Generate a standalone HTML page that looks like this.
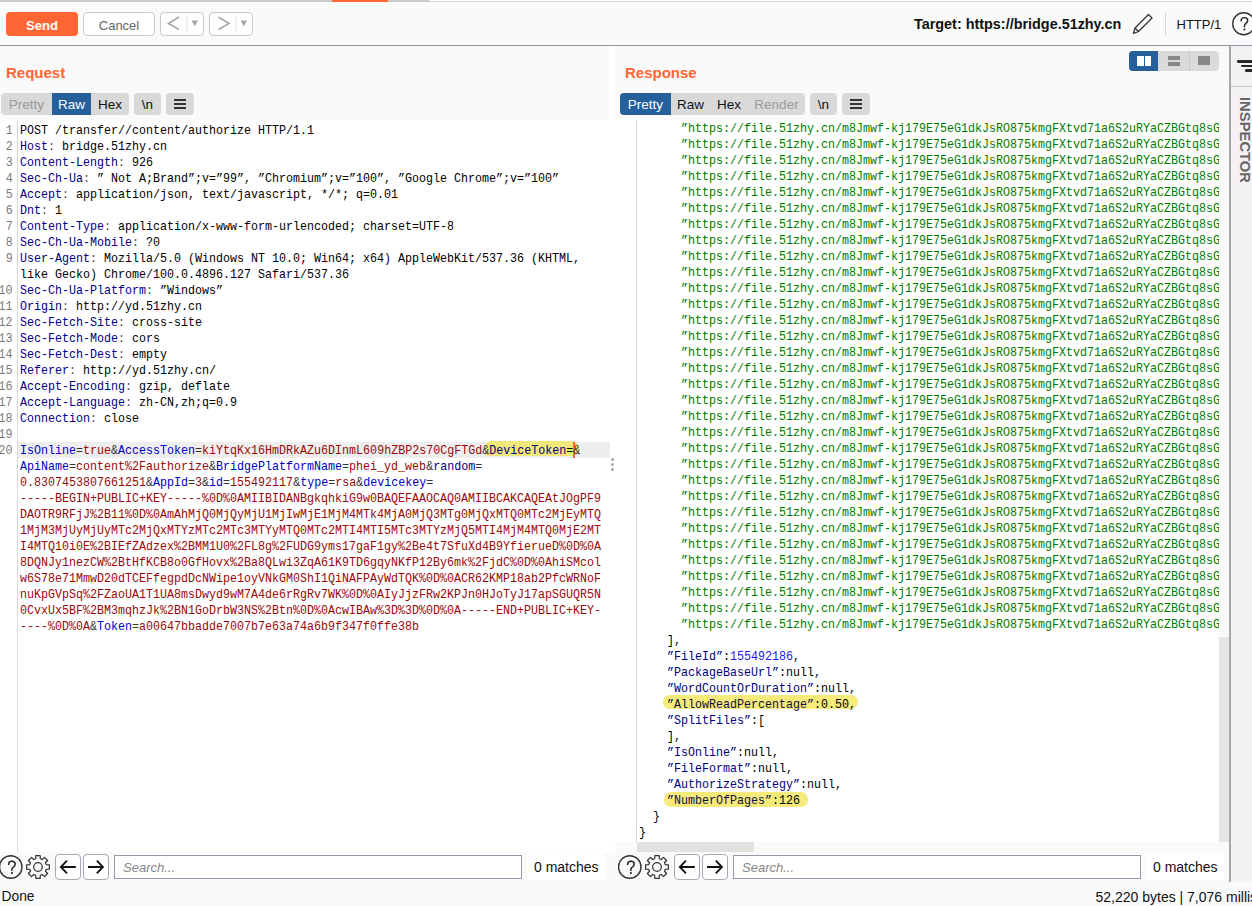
<!DOCTYPE html>
<html><head><meta charset="utf-8">
<style>
*{box-sizing:border-box;margin:0;padding:0}
html,body{width:1252px;height:906px;overflow:hidden;background:#fafafa}
body{position:relative;font-family:"Liberation Sans",sans-serif;color:#000}
.a{position:absolute}
.btn{position:absolute;border:1px solid #c9c9c9;border-radius:4px;background:#fff}
.lbl{position:absolute;font-weight:bold;font-size:15px;color:#ff6633;line-height:16px}
.tabs{position:absolute;top:93px;height:22px;background:#d9d9d9;border-radius:4px;overflow:hidden}
.tab{position:absolute;top:0;height:22px;line-height:23px;font-size:13.5px;text-align:center;color:#111}
.tab.act{background:#25609b;color:#fff}
.tab.dis{color:#9a9a9a}
.code{position:absolute;background:#fff;overflow:hidden}
.cl{position:absolute;left:0;white-space:pre;font-family:"Liberation Mono",monospace;font-size:13px;line-height:16px;height:16px;transform:scaleX(0.89744);transform-origin:0 0}
.ln{position:absolute;right:1px;white-space:pre;font-family:"Liberation Mono",monospace;font-size:13px;line-height:16px;transform:scaleX(0.89744);transform-origin:100% 0;color:#7a7a7a}
.h{color:#000080}.p{color:#555}.t{color:#000}
.n{color:#0000c0}.v{color:#990808}.e{color:#333}.a2{color:#333}
span.a{position:static;color:#333}
.hn{color:#000080}.he{color:#000}.kh{color:#101040}
.g{color:#007a00}.k{color:#000080}.b{color:#1a1aee}
.srch{position:absolute;top:855px;height:24px;border:1px solid #9a98ab;background:#fff;font-style:italic;color:#888;font-size:13px;line-height:23px;padding-left:8px}
.mt{position:absolute;top:853px;height:27px;background:#fff;font-size:14px;line-height:29px;padding-left:7px;color:#111}
.ib{position:absolute;top:854px;width:26px;height:26px;border:1px solid #a9a8b6;border-radius:4px;background:#fff}
</style></head><body>
<!-- top strip -->
<div class="a" style="left:0;top:0;width:429px;height:2px;background:#c8cccc"></div>
<div class="a" style="left:429px;top:0;width:823px;height:1px;background:#fff"></div>
<div class="a" style="left:429px;top:1px;width:823px;height:1px;background:#cfd1d1"></div>
<div class="a" style="left:332px;top:0;width:56px;height:2px;background:#ff6633"></div>

<!-- toolbar -->
<div class="a" style="left:6px;top:12px;width:72px;height:24px;background:#ff6633;border-radius:4px;color:#fff;font-weight:bold;font-size:13px;line-height:25px;padding-top:1px;text-align:center">Send</div>
<div class="btn" style="left:83px;top:12px;width:72px;height:24px;color:#666;font-size:13px;line-height:23px;padding-top:1px;text-align:center">Cancel</div>
<div class="btn" style="left:160px;top:12px;width:44px;height:24px"></div>
<div class="btn" style="left:209px;top:12px;width:44px;height:24px"></div>
<svg class="a" style="left:160px;top:12px" width="93" height="24" viewBox="0 0 93 24">
 <polyline points="19,5 8.5,11.5 19,17.5" fill="none" stroke="#a8a8a8" stroke-width="1.6"/>
 <line x1="27" y1="4" x2="27" y2="19.5" stroke="#e2e2e2" stroke-width="1"/>
 <polygon points="31.5,8.5 38,8.5 34.75,14.5" fill="#a8a8a8"/>
 <polyline points="58.5,5 69,11.5 58.5,17.5" fill="none" stroke="#a8a8a8" stroke-width="1.6"/>
 <line x1="76" y1="4" x2="76" y2="19.5" stroke="#e2e2e2" stroke-width="1"/>
 <polygon points="80.5,8.5 87,8.5 83.75,14.5" fill="#a8a8a8"/>
</svg>
<div class="a" style="left:914px;top:15px;font-weight:bold;font-size:14.4px;line-height:18px;color:#111">Target: https://bridge.51zhy.cn</div>
<svg class="a" style="left:1130px;top:12px" width="26" height="24" viewBox="0 0 26 24">
 <path d="M3.5,21.5 L5,16 L18.5,2.5 L22,6 L8.5,19.5 Z M5,16 L8.5,19.5" fill="none" stroke="#333" stroke-width="1.3" stroke-linejoin="round"/>
</svg>
<div class="a" style="left:1165px;top:12px;width:1px;height:24px;background:#d8d8d8"></div>
<div class="a" style="left:1176.5px;top:15.5px;font-size:13px;line-height:18px;color:#111">HTTP/1</div>
<svg class="a" style="left:1220px;top:0" width="32" height="45" viewBox="0 0 32 45">
 <circle cx="23.7" cy="23.7" r="11" fill="none" stroke="#333" stroke-width="1.4"/>
 <g transform="translate(11.5,8.4)"><path d="M9.6,12.4 C9.6,10.3 11.1,9.2 12.9,9.2 C14.8,9.2 16.2,10.5 16.2,12.2 C16.2,14 14.8,14.8 13.8,15.6 C13.1,16.2 12.9,16.8 12.9,18.4" fill="none" stroke="#222" stroke-width="1.45" stroke-linecap="round"/>
 <circle cx="12.9" cy="21.1" r="1.05" fill="#222"/></g>
</svg>

<div class="a" style="left:0;top:45px;width:1252px;height:1px;background:#9593a6"></div>

<!-- divider between panels -->
<div class="a" style="left:610px;top:46px;width:5px;height:807px;background:#fff"></div>

<!-- Request panel -->
<div class="lbl" style="left:6px;top:65px">Request</div>
<div class="tabs" style="left:1px;width:128px">
 <div class="tab dis" style="left:0;width:51px">Pretty</div>
 <div class="tab act" style="left:51px;width:39px">Raw</div>
 <div class="tab" style="left:90px;width:38px">Hex</div>
</div>
<div class="tabs" style="left:134px;width:27px"><div class="tab" style="left:0;width:27px">\n</div></div>
<div class="tabs" style="left:166px;width:28px">
 <div class="a" style="left:8px;top:6px;width:12px;height:2px;background:#333"></div>
 <div class="a" style="left:8px;top:10px;width:12px;height:2px;background:#333"></div>
 <div class="a" style="left:8px;top:14px;width:12px;height:2px;background:#333"></div>
</div>

<div class="code" style="left:0;top:120px;width:610px;height:732px">
 <div class="a" style="left:18px;top:322px;width:592px;height:16px;background:#eeeeee"></div>
 <div class="a" style="left:485px;top:321px;width:94px;height:15px;background:#f0e878;border-radius:6px 8px 8px 3px"></div>
 <div class="a" style="left:17px;top:0;width:1px;height:732px;background:#d9d9d9"></div>
 <div class="a" style="left:573px;top:322px;width:2px;height:16px;background:#ff6633"></div>
</div>
<div class="a" style="left:0;top:0;width:14px;height:852px;overflow:hidden">
<div class="a" style="left:0;top:0;width:14px;height:852px">
<div class="ln" style="top:123px">1</div>
<div class="ln" style="top:139px">2</div>
<div class="ln" style="top:155px">3</div>
<div class="ln" style="top:171px">4</div>
<div class="ln" style="top:187px">5</div>
<div class="ln" style="top:203px">6</div>
<div class="ln" style="top:219px">7</div>
<div class="ln" style="top:235px">8</div>
<div class="ln" style="top:251px">9</div>
<div class="ln" style="top:283px">10</div>
<div class="ln" style="top:299px">11</div>
<div class="ln" style="top:315px">12</div>
<div class="ln" style="top:331px">13</div>
<div class="ln" style="top:347px">14</div>
<div class="ln" style="top:363px">15</div>
<div class="ln" style="top:379px">16</div>
<div class="ln" style="top:395px">17</div>
<div class="ln" style="top:411px">18</div>
<div class="ln" style="top:427px">19</div>
<div class="ln" style="top:443px">20</div>
</div></div>
<div class="a" style="left:20px;top:0;width:590px;height:852px;overflow:hidden" id="reqtxt">
<div class="cl" style="top:123px"><span class="t">POST /transfer//content/authorize HTTP/1.1</span></div>
<div class="cl" style="top:139px"><span class="h">Host</span><span class="p">: </span><span class="t">bridge.51zhy.cn</span></div>
<div class="cl" style="top:155px"><span class="h">Content-Length</span><span class="p">: </span><span class="t">926</span></div>
<div class="cl" style="top:171px"><span class="h">Sec-Ch-Ua</span><span class="p">: </span><span class="t">” Not A;Brand”;v=”99”, ”Chromium”;v=”100”, ”Google Chrome”;v=”100”</span></div>
<div class="cl" style="top:187px"><span class="h">Accept</span><span class="p">: </span><span class="t">application/json, text/javascript, */*; q=0.01</span></div>
<div class="cl" style="top:203px"><span class="h">Dnt</span><span class="p">: </span><span class="t">1</span></div>
<div class="cl" style="top:219px"><span class="h">Content-Type</span><span class="p">: </span><span class="t">application/x-www-form-urlencoded; charset=UTF-8</span></div>
<div class="cl" style="top:235px"><span class="h">Sec-Ch-Ua-Mobile</span><span class="p">: </span><span class="t">?0</span></div>
<div class="cl" style="top:251px"><span class="h">User-Agent</span><span class="p">: </span><span class="t">Mozilla/5.0 (Windows NT 10.0; Win64; x64) AppleWebKit/537.36 (KHTML,</span></div>
<div class="cl" style="top:267px"><span class="t">like Gecko) Chrome/100.0.4896.127 Safari/537.36</span></div>
<div class="cl" style="top:283px"><span class="h">Sec-Ch-Ua-Platform</span><span class="p">: </span><span class="t">”Windows”</span></div>
<div class="cl" style="top:299px"><span class="h">Origin</span><span class="p">: </span><span class="t">http://yd.51zhy.cn</span></div>
<div class="cl" style="top:315px"><span class="h">Sec-Fetch-Site</span><span class="p">: </span><span class="t">cross-site</span></div>
<div class="cl" style="top:331px"><span class="h">Sec-Fetch-Mode</span><span class="p">: </span><span class="t">cors</span></div>
<div class="cl" style="top:347px"><span class="h">Sec-Fetch-Dest</span><span class="p">: </span><span class="t">empty</span></div>
<div class="cl" style="top:363px"><span class="h">Referer</span><span class="p">: </span><span class="t">http://yd.51zhy.cn/</span></div>
<div class="cl" style="top:379px"><span class="h">Accept-Encoding</span><span class="p">: </span><span class="t">gzip, deflate</span></div>
<div class="cl" style="top:395px"><span class="h">Accept-Language</span><span class="p">: </span><span class="t">zh-CN,zh;q=0.9</span></div>
<div class="cl" style="top:411px"><span class="h">Connection</span><span class="p">: </span><span class="t">close</span></div>
<div class="cl" style="top:427px"><span class="t"></span></div>
<div class="cl" style="top:443px"><span class="n">IsOnline</span><span class="e">=</span><span class="v">true</span><span class="a">&amp;</span><span class="n">AccessToken</span><span class="e">=</span><span class="v">kiYtqKx16HmDRkAZu6DInmL609hZBP2s70CgFTGd</span><span class="a">&amp;</span><span class="hn">DeviceToken</span><span class="he">=</span><span class="a">&amp;</span></div>
<div class="cl" style="top:459px"><span class="n">ApiName</span><span class="e">=</span><span class="v">content%2Fauthorize</span><span class="a">&amp;</span><span class="n">BridgePlatformName</span><span class="e">=</span><span class="v">phei_yd_web</span><span class="a">&amp;</span><span class="hn">random</span><span class="e">=</span></div>
<div class="cl" style="top:475px"><span class="v">0.8307453807661251</span><span class="a">&amp;</span><span class="n">AppId</span><span class="e">=</span><span class="v">3</span><span class="a">&amp;</span><span class="n">id</span><span class="e">=</span><span class="v">155492117</span><span class="a">&amp;</span><span class="n">type</span><span class="e">=</span><span class="v">rsa</span><span class="a">&amp;</span><span class="n">devicekey</span><span class="e">=</span></div>
<div class="cl" style="top:491px"><span class="v">-----BEGIN+PUBLIC+KEY-----%0D%0AMIIBIDANBgkqhkiG9w0BAQEFAAOCAQ0AMIIBCAKCAQEAtJOgPF9</span></div>
<div class="cl" style="top:507px"><span class="v">DAOTR9RFjJ%2B11%0D%0AmAhMjQ0MjQyMjU1MjIwMjE1MjM4MTk4MjA0MjQ3MTg0MjQxMTQ0MTc2MjEyMTQ</span></div>
<div class="cl" style="top:523px"><span class="v">1MjM3MjUyMjUyMTc2MjQxMTYzMTc2MTc3MTYyMTQ0MTc2MTI4MTI5MTc3MTYzMjQ5MTI4MjM4MTQ0MjE2MT</span></div>
<div class="cl" style="top:539px"><span class="v">I4MTQ10i0E%2BIEfZAdzex%2BMM1U0%2FL8g%2FUDG9yms17gaF1gy%2Be4t7SfuXd4B9YfierueD%0D%0A</span></div>
<div class="cl" style="top:555px"><span class="v">8DQNJy1nezCW%2BtHfKCB8o0GfHovx%2Ba8QLwi3ZqA61K9TD6gqyNKfP12By6mk%2FjdC%0D%0AhiSMcol</span></div>
<div class="cl" style="top:571px"><span class="v">w6S78e71MmwD20dTCEFfegpdDcNWipe1oyVNkGM0ShI1QiNAFPAyWdTQK%0D%0ACR62KMP18ab2PfcWRNoF</span></div>
<div class="cl" style="top:587px"><span class="v">nuKpGVpSq%2FZaoUA1T1UA8msDwyd9wM7A4de6rRgRv7WK%0D%0AIyJjzFRw2KPJn0HJoTyJ17apSGUQR5N</span></div>
<div class="cl" style="top:603px"><span class="v">0CvxUx5BF%2BM3mqhzJk%2BN1GoDrbW3NS%2Btn%0D%0AcwIBAw%3D%3D%0D%0A-----END+PUBLIC+KEY-</span></div>
<div class="cl" style="top:619px"><span class="v">----%0D%0A</span><span class="a">&amp;</span><span class="n">Token</span><span class="e">=</span><span class="v">a00647bbadde7007b7e63a74a6b9f347f0ffe38b</span></div>
</div>

<div class="a" style="left:611px;top:458px;width:3px;height:3px;border-radius:50%;background:#a8a8a8"></div>
<div class="a" style="left:611px;top:463px;width:3px;height:3px;border-radius:50%;background:#a8a8a8"></div>
<div class="a" style="left:611px;top:468px;width:3px;height:3px;border-radius:50%;background:#a8a8a8"></div>
<!-- Response panel -->
<div class="lbl" style="left:625px;top:65px">Response</div>
<div class="tabs" style="left:620px;width:185px">
 <div class="tab act" style="left:0;width:51px">Pretty</div>
 <div class="tab" style="left:51px;width:39px">Raw</div>
 <div class="tab" style="left:90px;width:38px">Hex</div>
 <div class="tab dis" style="left:128px;width:57px">Render</div>
</div>
<div class="tabs" style="left:810px;width:27px"><div class="tab" style="left:0;width:27px">\n</div></div>
<div class="tabs" style="left:842px;width:28px">
 <div class="a" style="left:8px;top:6px;width:12px;height:2px;background:#333"></div>
 <div class="a" style="left:8px;top:10px;width:12px;height:2px;background:#333"></div>
 <div class="a" style="left:8px;top:14px;width:12px;height:2px;background:#333"></div>
</div>
<!-- layout toggle -->
<div class="a" style="left:1129px;top:51px;width:90px;height:20px;background:#dadada;border-radius:4px;overflow:hidden">
 <div class="a" style="left:0;top:0;width:29px;height:20px;background:#25609b"></div>
 <div class="a" style="left:8px;top:5px;width:6.5px;height:10px;background:#fff"></div>
 <div class="a" style="left:15.5px;top:5px;width:6.5px;height:10px;background:#fff"></div>
 <div class="a" style="left:39px;top:5px;width:12px;height:4px;background:#888"></div>
 <div class="a" style="left:39px;top:11px;width:12px;height:4px;background:#888"></div>
 <div class="a" style="left:59.5px;top:0;width:1px;height:20px;background:#c8c8c8"></div>
 <div class="a" style="left:69px;top:5px;width:12px;height:9px;background:#888"></div>
</div>

<div class="code" style="left:615px;top:120px;width:604px;height:722px">
 <div class="a" style="left:21px;top:0;width:1px;height:722px;background:#d9d9d9"></div>
 <div class="a" style="left:48px;top:575px;width:195px;height:14px;background:#f5ea7a;border-radius:7px"></div>
 <div class="a" style="left:49px;top:672px;width:144px;height:15px;background:#f5ea7a;border-radius:7px"></div>
</div>
<div class="a" style="left:637px;top:842px;width:117px;height:10px;background:#e1e1e1"></div>
<div class="a" style="left:639px;top:0;width:580px;height:842px;overflow:hidden" id="resptxt">
<div class="a" style="left:0;top:120px;width:580px;height:722px;overflow:hidden">
<div class="a" style="left:0;top:-120px;width:580px;height:842px">
<div class="cl" style="top:121px"><span class="sp">      </span><span class="g">”https://file.51zhy.cn/m8Jmwf-kj179E75eG1dkJsRO875kmgFXtvd71a6S2uRYaCZBGtq8sG</span></div>
<div class="cl" style="top:137px"><span class="sp">      </span><span class="g">”https://file.51zhy.cn/m8Jmwf-kj179E75eG1dkJsRO875kmgFXtvd71a6S2uRYaCZBGtq8sG</span></div>
<div class="cl" style="top:153px"><span class="sp">      </span><span class="g">”https://file.51zhy.cn/m8Jmwf-kj179E75eG1dkJsRO875kmgFXtvd71a6S2uRYaCZBGtq8sG</span></div>
<div class="cl" style="top:169px"><span class="sp">      </span><span class="g">”https://file.51zhy.cn/m8Jmwf-kj179E75eG1dkJsRO875kmgFXtvd71a6S2uRYaCZBGtq8sG</span></div>
<div class="cl" style="top:185px"><span class="sp">      </span><span class="g">”https://file.51zhy.cn/m8Jmwf-kj179E75eG1dkJsRO875kmgFXtvd71a6S2uRYaCZBGtq8sG</span></div>
<div class="cl" style="top:201px"><span class="sp">      </span><span class="g">”https://file.51zhy.cn/m8Jmwf-kj179E75eG1dkJsRO875kmgFXtvd71a6S2uRYaCZBGtq8sG</span></div>
<div class="cl" style="top:217px"><span class="sp">      </span><span class="g">”https://file.51zhy.cn/m8Jmwf-kj179E75eG1dkJsRO875kmgFXtvd71a6S2uRYaCZBGtq8sG</span></div>
<div class="cl" style="top:233px"><span class="sp">      </span><span class="g">”https://file.51zhy.cn/m8Jmwf-kj179E75eG1dkJsRO875kmgFXtvd71a6S2uRYaCZBGtq8sG</span></div>
<div class="cl" style="top:249px"><span class="sp">      </span><span class="g">”https://file.51zhy.cn/m8Jmwf-kj179E75eG1dkJsRO875kmgFXtvd71a6S2uRYaCZBGtq8sG</span></div>
<div class="cl" style="top:265px"><span class="sp">      </span><span class="g">”https://file.51zhy.cn/m8Jmwf-kj179E75eG1dkJsRO875kmgFXtvd71a6S2uRYaCZBGtq8sG</span></div>
<div class="cl" style="top:281px"><span class="sp">      </span><span class="g">”https://file.51zhy.cn/m8Jmwf-kj179E75eG1dkJsRO875kmgFXtvd71a6S2uRYaCZBGtq8sG</span></div>
<div class="cl" style="top:297px"><span class="sp">      </span><span class="g">”https://file.51zhy.cn/m8Jmwf-kj179E75eG1dkJsRO875kmgFXtvd71a6S2uRYaCZBGtq8sG</span></div>
<div class="cl" style="top:313px"><span class="sp">      </span><span class="g">”https://file.51zhy.cn/m8Jmwf-kj179E75eG1dkJsRO875kmgFXtvd71a6S2uRYaCZBGtq8sG</span></div>
<div class="cl" style="top:329px"><span class="sp">      </span><span class="g">”https://file.51zhy.cn/m8Jmwf-kj179E75eG1dkJsRO875kmgFXtvd71a6S2uRYaCZBGtq8sG</span></div>
<div class="cl" style="top:345px"><span class="sp">      </span><span class="g">”https://file.51zhy.cn/m8Jmwf-kj179E75eG1dkJsRO875kmgFXtvd71a6S2uRYaCZBGtq8sG</span></div>
<div class="cl" style="top:361px"><span class="sp">      </span><span class="g">”https://file.51zhy.cn/m8Jmwf-kj179E75eG1dkJsRO875kmgFXtvd71a6S2uRYaCZBGtq8sG</span></div>
<div class="cl" style="top:377px"><span class="sp">      </span><span class="g">”https://file.51zhy.cn/m8Jmwf-kj179E75eG1dkJsRO875kmgFXtvd71a6S2uRYaCZBGtq8sG</span></div>
<div class="cl" style="top:393px"><span class="sp">      </span><span class="g">”https://file.51zhy.cn/m8Jmwf-kj179E75eG1dkJsRO875kmgFXtvd71a6S2uRYaCZBGtq8sG</span></div>
<div class="cl" style="top:409px"><span class="sp">      </span><span class="g">”https://file.51zhy.cn/m8Jmwf-kj179E75eG1dkJsRO875kmgFXtvd71a6S2uRYaCZBGtq8sG</span></div>
<div class="cl" style="top:425px"><span class="sp">      </span><span class="g">”https://file.51zhy.cn/m8Jmwf-kj179E75eG1dkJsRO875kmgFXtvd71a6S2uRYaCZBGtq8sG</span></div>
<div class="cl" style="top:441px"><span class="sp">      </span><span class="g">”https://file.51zhy.cn/m8Jmwf-kj179E75eG1dkJsRO875kmgFXtvd71a6S2uRYaCZBGtq8sG</span></div>
<div class="cl" style="top:457px"><span class="sp">      </span><span class="g">”https://file.51zhy.cn/m8Jmwf-kj179E75eG1dkJsRO875kmgFXtvd71a6S2uRYaCZBGtq8sG</span></div>
<div class="cl" style="top:473px"><span class="sp">      </span><span class="g">”https://file.51zhy.cn/m8Jmwf-kj179E75eG1dkJsRO875kmgFXtvd71a6S2uRYaCZBGtq8sG</span></div>
<div class="cl" style="top:489px"><span class="sp">      </span><span class="g">”https://file.51zhy.cn/m8Jmwf-kj179E75eG1dkJsRO875kmgFXtvd71a6S2uRYaCZBGtq8sG</span></div>
<div class="cl" style="top:505px"><span class="sp">      </span><span class="g">”https://file.51zhy.cn/m8Jmwf-kj179E75eG1dkJsRO875kmgFXtvd71a6S2uRYaCZBGtq8sG</span></div>
<div class="cl" style="top:521px"><span class="sp">      </span><span class="g">”https://file.51zhy.cn/m8Jmwf-kj179E75eG1dkJsRO875kmgFXtvd71a6S2uRYaCZBGtq8sG</span></div>
<div class="cl" style="top:537px"><span class="sp">      </span><span class="g">”https://file.51zhy.cn/m8Jmwf-kj179E75eG1dkJsRO875kmgFXtvd71a6S2uRYaCZBGtq8sG</span></div>
<div class="cl" style="top:553px"><span class="sp">      </span><span class="g">”https://file.51zhy.cn/m8Jmwf-kj179E75eG1dkJsRO875kmgFXtvd71a6S2uRYaCZBGtq8sG</span></div>
<div class="cl" style="top:569px"><span class="sp">      </span><span class="g">”https://file.51zhy.cn/m8Jmwf-kj179E75eG1dkJsRO875kmgFXtvd71a6S2uRYaCZBGtq8sG</span></div>
<div class="cl" style="top:585px"><span class="sp">      </span><span class="g">”https://file.51zhy.cn/m8Jmwf-kj179E75eG1dkJsRO875kmgFXtvd71a6S2uRYaCZBGtq8sG</span></div>
<div class="cl" style="top:601px"><span class="sp">      </span><span class="g">”https://file.51zhy.cn/m8Jmwf-kj179E75eG1dkJsRO875kmgFXtvd71a6S2uRYaCZBGtq8sG</span></div>
<div class="cl" style="top:617px"><span class="sp">      </span><span class="g">”https://file.51zhy.cn/m8Jmwf-kj179E75eG1dkJsRO875kmgFXtvd71a6S2uRYaCZBGtq8sG</span></div>
<div class="cl" style="top:633px"><span class="sp">    </span><span class="t">],</span></div>
<div class="cl" style="top:649px"><span class="sp">    </span><span class="k">”FileId”</span><span class="t">:</span><span class="b">155492186</span><span class="t">,</span></div>
<div class="cl" style="top:665px"><span class="sp">    </span><span class="k">”PackageBaseUrl”</span><span class="t">:null,</span></div>
<div class="cl" style="top:681px"><span class="sp">    </span><span class="k">”WordCountOrDuration”</span><span class="t">:null,</span></div>
<div class="cl" style="top:697px"><span class="sp">    </span><span class="kh">”AllowReadPercentage”</span><span class="t">:0.50,</span></div>
<div class="cl" style="top:713px"><span class="sp">    </span><span class="k">”SplitFiles”</span><span class="t">:[</span></div>
<div class="cl" style="top:729px"><span class="sp">    </span><span class="t">],</span></div>
<div class="cl" style="top:745px"><span class="sp">    </span><span class="k">”IsOnline”</span><span class="t">:null,</span></div>
<div class="cl" style="top:761px"><span class="sp">    </span><span class="k">”FileFormat”</span><span class="t">:null,</span></div>
<div class="cl" style="top:777px"><span class="sp">    </span><span class="k">”AuthorizeStrategy”</span><span class="t">:null,</span></div>
<div class="cl" style="top:793px"><span class="sp">    </span><span class="kh">”NumberOfPages”</span><span class="t">:126</span></div>
<div class="cl" style="top:809px"><span class="sp">  </span><span class="t">}</span></div>
<div class="cl" style="top:825px"><span class="t">}</span></div>
</div></div></div>
<!-- vertical scrollbar -->
<div class="a" style="left:1219px;top:120px;width:10px;height:732px;background:#fafafa"></div>
<div class="a" style="left:1219px;top:637px;width:10px;height:205px;background:#e5e5e5"></div>

<!-- Inspector -->
<div class="a" style="left:1229px;top:46px;width:2px;height:836px;background:#aca6a8"></div>
<div class="a" style="left:1231px;top:46px;width:21px;height:836px;background:#f3f1f3"></div>
<div class="a" style="left:1231px;top:86px;width:21px;height:1px;background:#c8c8c8"></div>
<div class="a" style="left:1237px;top:60.2px;width:17px;height:2.5px;border-radius:1.25px;background:#2a2a2a"></div>
<div class="a" style="left:1241px;top:64.8px;width:13px;height:2.5px;border-radius:1.25px;background:#2a2a2a"></div>
<div class="a" style="left:1244.8px;top:69.4px;width:10px;height:2.5px;border-radius:1.25px;background:#2a2a2a"></div>
<div class="a" style="left:1238px;top:97px;width:14px;height:87px;overflow:hidden">
 <div class="a" style="left:14px;top:0;transform:rotate(90deg);transform-origin:0 0;font-weight:bold;font-size:14.8px;line-height:14px;color:#666;letter-spacing:0px;white-space:nowrap">INSPECTOR</div>
</div>

<!-- bottom bars -->
<svg class="a" style="left:-1px;top:852px" width="112" height="30" viewBox="0 0 112 30">
 <circle cx="11.75" cy="15" r="11.25" fill="none" stroke="#333" stroke-width="1.4"/>
 <path d="M9.6,12.4 C9.6,10.3 11.1,9.2 12.9,9.2 C14.8,9.2 16.2,10.5 16.2,12.2 C16.2,14 14.8,14.8 13.8,15.6 C13.1,16.2 12.9,16.8 12.9,18.4" fill="none" stroke="#222" stroke-width="1.45" stroke-linecap="round"/>
 <circle cx="12.9" cy="21.1" r="1.05" fill="#222"/>
 <path d="M47.29,12.71 L50.39,12.81 L50.39,17.19 L47.29,17.29 L46.48,19.24 L48.60,21.51 L45.51,24.60 L43.24,22.48 L41.29,23.29 L41.19,26.39 L36.81,26.39 L36.71,23.29 L34.76,22.48 L32.49,24.60 L29.40,21.51 L31.52,19.24 L30.71,17.29 L27.61,17.19 L27.61,12.81 L30.71,12.71 L31.52,10.76 L29.40,8.49 L32.49,5.40 L34.76,7.52 L36.71,6.71 L36.81,3.61 L41.19,3.61 L41.29,6.71 L43.24,7.52 L45.51,5.40 L48.60,8.49 L46.48,10.76 Z" fill="none" stroke="#333" stroke-width="1.2" stroke-linejoin="round"/>
 <circle cx="39" cy="15" r="4.3" fill="none" stroke="#333" stroke-width="1.2"/>
</svg>
<div class="ib" style="left:55px"></div>
<div class="ib" style="left:83px"></div>
<svg class="a" style="left:55px;top:854px" width="60" height="26" viewBox="0 0 60 26">
 <path d="M20.8,13 H5.8 M12,6.6 L5.8,13 L12,19.4" fill="none" stroke="#111" stroke-width="1.8"/>
 <path d="M33,13 H48 M41.8,6.6 L48,13 L41.8,19.4" fill="none" stroke="#111" stroke-width="1.8"/>
</svg>
<div class="srch" style="left:114px;width:408px">Search...</div>
<div class="mt" style="left:527px;width:78px">0 matches</div>
<svg class="a" style="left:618px;top:852px" width="112" height="30" viewBox="0 0 112 30">
 <circle cx="11.75" cy="15" r="11.25" fill="none" stroke="#333" stroke-width="1.4"/>
 <path d="M9.6,12.4 C9.6,10.3 11.1,9.2 12.9,9.2 C14.8,9.2 16.2,10.5 16.2,12.2 C16.2,14 14.8,14.8 13.8,15.6 C13.1,16.2 12.9,16.8 12.9,18.4" fill="none" stroke="#222" stroke-width="1.45" stroke-linecap="round"/>
 <circle cx="12.9" cy="21.1" r="1.05" fill="#222"/>
 <path d="M47.29,12.71 L50.39,12.81 L50.39,17.19 L47.29,17.29 L46.48,19.24 L48.60,21.51 L45.51,24.60 L43.24,22.48 L41.29,23.29 L41.19,26.39 L36.81,26.39 L36.71,23.29 L34.76,22.48 L32.49,24.60 L29.40,21.51 L31.52,19.24 L30.71,17.29 L27.61,17.19 L27.61,12.81 L30.71,12.71 L31.52,10.76 L29.40,8.49 L32.49,5.40 L34.76,7.52 L36.71,6.71 L36.81,3.61 L41.19,3.61 L41.29,6.71 L43.24,7.52 L45.51,5.40 L48.60,8.49 L46.48,10.76 Z" fill="none" stroke="#333" stroke-width="1.2" stroke-linejoin="round"/>
 <circle cx="39" cy="15" r="4.3" fill="none" stroke="#333" stroke-width="1.2"/>
</svg>
<div class="ib" style="left:674px"></div>
<div class="ib" style="left:702px"></div>
<svg class="a" style="left:674px;top:854px" width="60" height="26" viewBox="0 0 60 26">
 <path d="M20.8,13 H5.8 M12,6.6 L5.8,13 L12,19.4" fill="none" stroke="#111" stroke-width="1.8"/>
 <path d="M33,13 H48 M41.8,6.6 L48,13 L41.8,19.4" fill="none" stroke="#111" stroke-width="1.8"/>
</svg>
<div class="srch" style="left:733px;width:408px">Search...</div>
<div class="mt" style="left:1146px;width:78px">0 matches</div>

<!-- status -->
<div class="a" style="left:1.5px;top:888px;font-size:13.8px;line-height:18px;color:#111">Done</div>
<div class="a" style="left:1095.5px;top:888px;font-size:14px;line-height:18px;color:#111;white-space:nowrap">52,220 bytes | 7,076 millis</div>
</body></html>
